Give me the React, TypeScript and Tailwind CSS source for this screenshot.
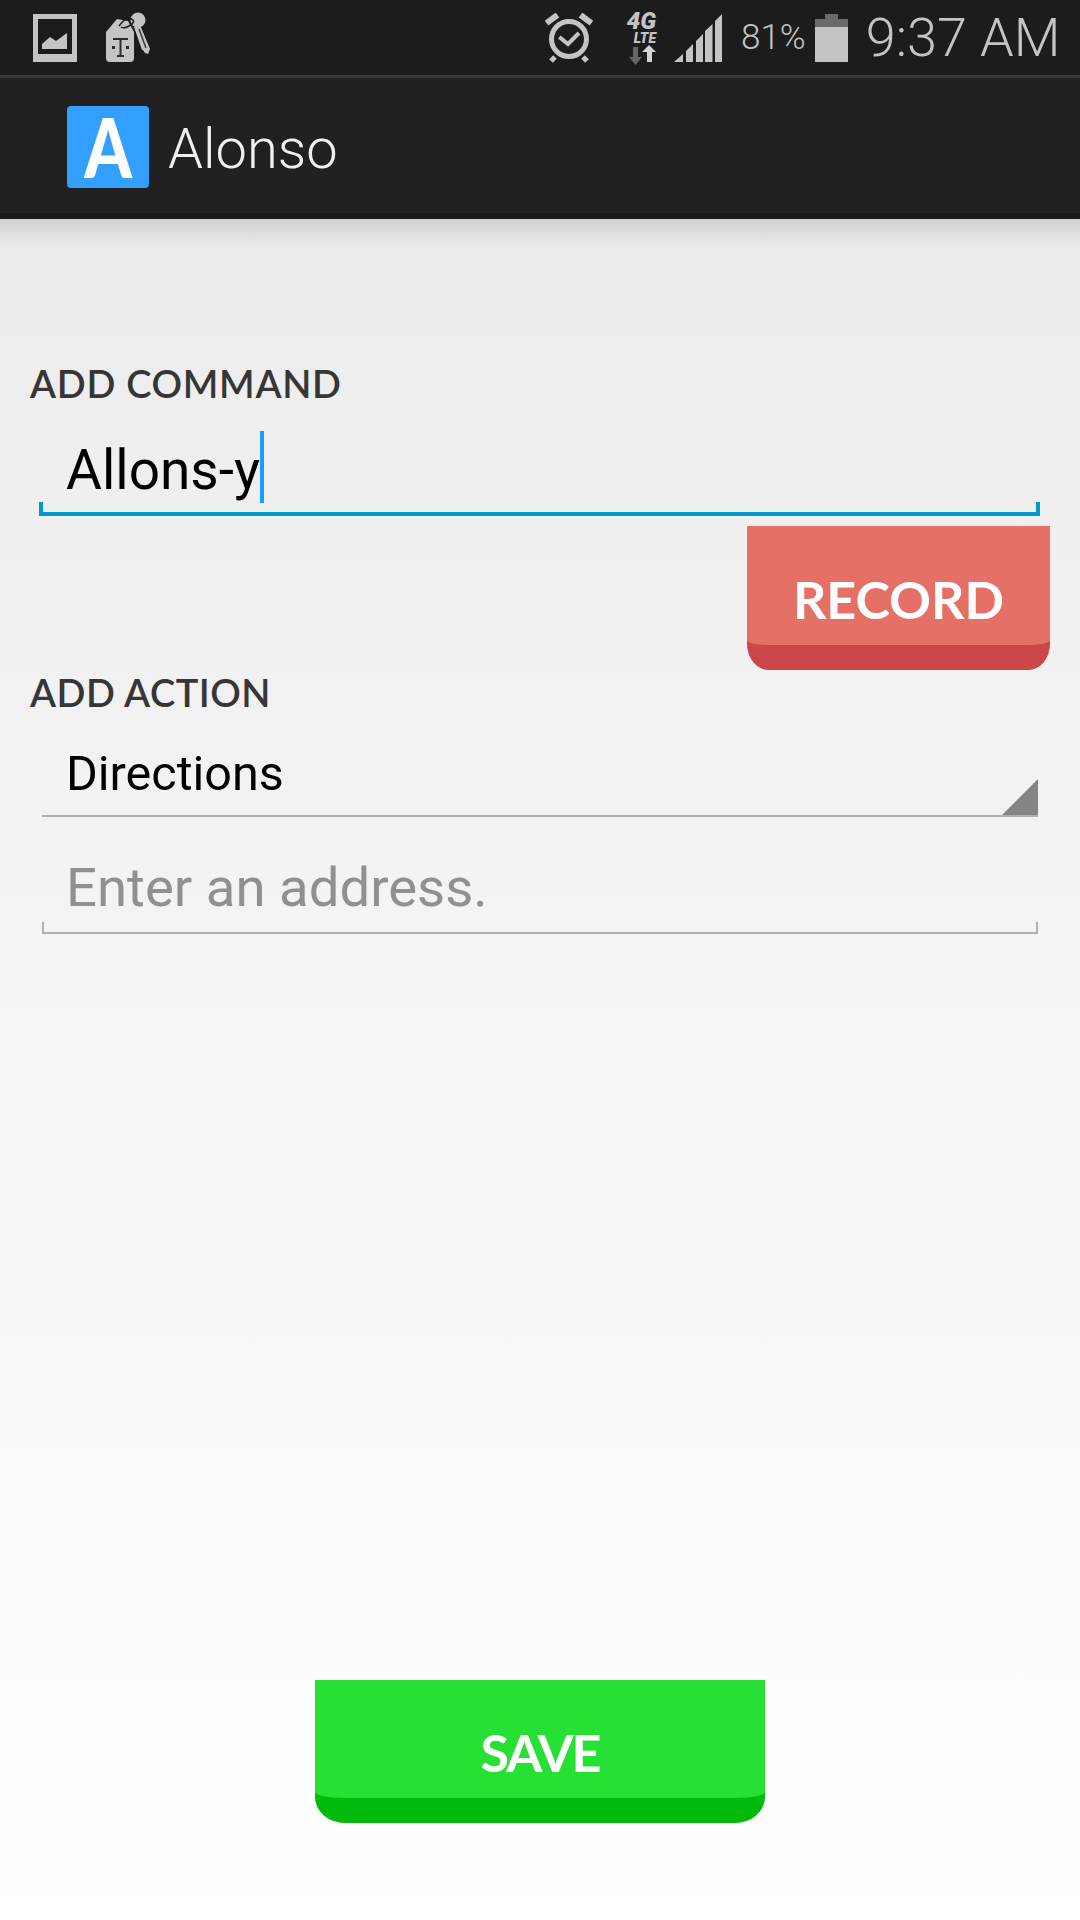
export default function App() {
  return (
    <div className="w-[1080px] h-[1920px] flex flex-col overflow-hidden bg-white font-['Roboto',sans-serif]">
      {/* status bar */}
      <div className="h-[78px] shrink-0 bg-[#1c1c1c] border-b-[3px] border-[#3a3a3a] flex items-center text-[#c4c4c4]">
        <svg className="ml-[33px] w-[44px] h-[48px]" viewBox="0 0 44 48">
          <path fillRule="evenodd" fill="#c4c4c4" d="M0 0h44v48H0zM5 5v35h34V5z" />
          <path fill="#c4c4c4" d="M9 35v-5l8-7 6 4 11-8v16z" />
        </svg>
        <svg className="ml-[28px] w-[46px] h-[52px]" viewBox="0 0 46 52">
          <path fill="#c4c4c4" d="M1 20L12 7l11 2 6 11v26q0 4-4 4H5q-4 0-4-4z" />
          <circle cx="33" cy="8" r="7.5" fill="#c4c4c4" />
          <path fill="#c4c4c4" d="M29 15l6-2 10 24-2 5-3-1-2-3-1 0z" />
          <path fill="none" stroke="#1c1c1c" strokeWidth="1.5" d="M14 14q6-9 12-7t-2 7q-5 3-8 1" />
          <path fill="none" stroke="#3a3a3a" strokeWidth="1.5" d="M34 17l7 19" />
          <path fill="none" stroke="#2a2a2a" strokeWidth="2" d="M8 27h15M15.5 27v16M12 44h7" />
          <path fill="#2a2a2a" d="M7 34h3v3H7zM21 34h3v3h-3z" />
        </svg>
        <svg className="ml-[394px] w-[48px] h-[50px]" viewBox="0 0 48 50" fill="none" stroke="#c4c4c4">
          <circle cx="24" cy="26" r="17.5" strokeWidth="5" />
          <path strokeWidth="4" d="M14.3 24l8.7 7 11-11" />
          <path strokeWidth="6" d="M1.5 10L12.500 2M46.5 10L35.5 2" />
          <path strokeWidth="5" d="M10 44l-4 4M38 44l4 4" />
        </svg>
        <div className="ml-[32px] w-[31px] h-[54px] flex flex-col items-end">
          <span className="text-[24px] leading-[20px] font-black italic">4G</span>
          <span className="text-[14px] leading-[14px] font-black italic">LTE</span>
          <svg className="mt-[0px] w-[27px] h-[20px] shrink-0" viewBox="0 0 27 20">
            <path fill="#666" d="M4 2h5v10h4l-6.500 8L0 12h4z" />
            <path fill="#d4d4d4" d="M18 17h5V7h4l-7-7-7 7h5z" />
          </svg>
        </div>
        <svg className="ml-[18px] w-[48px] h-[48px]" viewBox="0 0 48 48" fill="#c4c4c4">
          <path d="M0 48l9-8v8zM12 48V37l7-7v18zM22 48V27l7-7v28zM31 48V17l7.500-7v38zM41 48V7l7-7v48z" />
        </svg>
        <span className="ml-[19px] text-[35px] leading-none font-light">81%</span>
        <svg className="ml-[9px] w-[33px] h-[48px]" viewBox="0 0 33 48">
          <path fill="#6a6a6a" d="M0 5h10V0h13v5h10v9H0z" />
          <path fill="#c4c4c4" d="M0 13h33v35H0z" />
        </svg>
        <span className="ml-[18px] text-[54px] leading-none font-light whitespace-nowrap">9:37 AM</span>
      </div>
      {/* action bar */}
      <div className="h-[141px] shrink-0 bg-[#212121] border-b-[6px] border-[#1a1a1a] flex items-center">
        <div className="ml-[67px] mt-[2px] w-[82px] h-[82px] rounded-[4px] bg-[#33a0ff] flex items-center justify-center">
          <span className="text-[68px] leading-none font-['Lato',sans-serif] font-black text-white scale-y-[1.2]">A</span>
        </div>
        <span className="ml-[19px] mt-[6px] text-[56px] leading-none font-light text-[#f0f0f0]">Alonso</span>
      </div>
      {/* content */}
      <div className="flex-1 flex flex-col bg-linear-to-b from-[#ececec] to-white">
        <div className="h-[30px] shrink-0 bg-linear-to-b from-[#d2d2d2] to-transparent" />
        <div className="ml-[30px] mt-[112px] h-[44px] flex items-center font-['Lato',sans-serif] font-semibold text-[38px] tracking-[0.7px] leading-none text-[#363636]">ADD COMMAND</div>
        <div className="relative ml-[39px] mt-[26px] w-[1001px] h-[85px] border-b-4 border-[#0099cc] flex items-start">
          <span className="ml-[27px] mt-[6px] text-[55px] leading-[66px] text-black">Allons-y</span>
          <span className="w-[4px] h-[72px] bg-[#1a9bff]" />
          <span className="absolute left-0 bottom-0 w-[4px] h-[10px] bg-[#0099cc]" />
          <span className="absolute right-0 bottom-0 w-[4px] h-[10px] bg-[#0099cc]" />
        </div>
        <div className="self-end mr-[30px] mt-[10px] w-[303px] h-[144px] shrink-0 bg-[#cb4749] [border-radius:0_0_22px_22px/0_0_26px_26px] overflow-hidden flex flex-col">
          <div className="h-[119px] bg-[#e57166] [border-radius:0_0_20px_20px/0_0_5px_5px] flex items-center justify-center pt-[26px] font-['Lato',sans-serif] font-bold text-[52px] leading-none text-white">RECORD</div>
        </div>
        <div className="ml-[30px] h-[44px] flex items-center font-['Lato',sans-serif] font-semibold text-[38px] tracking-[0.5px] leading-none text-[#363636]">ADD ACTION</div>
        <div className="relative ml-[42px] mt-[24px] w-[996px] h-[79px] border-b-2 border-[#b0b0b0] flex items-center pb-[4px]">
          <span className="ml-[24px] text-[48.5px] leading-none text-black">Directions</span>
          <span className="absolute right-0 bottom-0 w-[36px] h-[36px] bg-[#858585] [clip-path:polygon(100%_0,100%_100%,0_100%)]" />
        </div>
        <div className="relative ml-[42px] mt-[35px] w-[996px] h-[82px] border-b-2 border-[#b0b0b0] flex items-center pb-[10px]">
          <span className="ml-[24px] text-[54.500px] leading-none text-[#909090]">Enter an address.</span>
          <span className="absolute left-0 bottom-0 w-[2px] h-[10px] bg-[#b0b0b0]" />
          <span className="absolute right-0 bottom-0 w-[2px] h-[10px] bg-[#b0b0b0]" />
        </div>
        <div className="self-start ml-[315px] mt-[746px] w-[450px] h-[143px] shrink-0 bg-[#00bb0c] [border-radius:0_0_30px_30px/0_0_26px_26px] overflow-hidden flex flex-col">
          <div className="h-[118px] bg-[#26e033] [border-radius:0_0_30px_30px/0_0_6px_6px] flex items-center justify-center pt-[26px] font-['Lato',sans-serif] font-bold text-[52px] tracking-[-2px] leading-none text-white">SAVE</div>
        </div>
      </div>
    </div>
  );
}
